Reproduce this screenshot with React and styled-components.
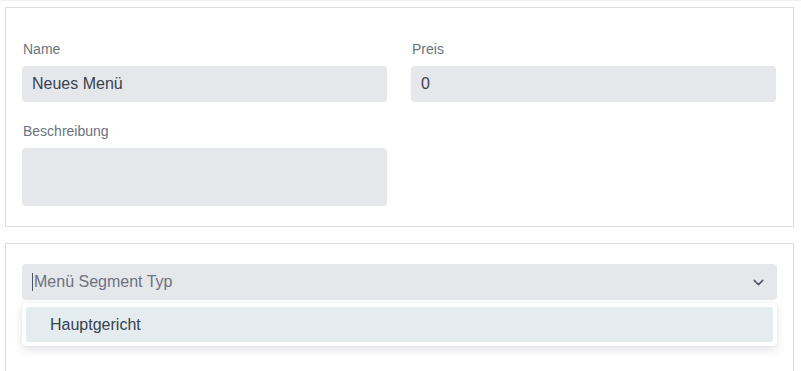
import React from 'react';
import styled, { createGlobalStyle } from 'styled-components';

const GlobalStyle = createGlobalStyle`
  html, body {
    margin: 0;
    padding: 0;
    background: #ffffff;
    font-family: 'Liberation Sans', Arial, sans-serif;
    overflow: hidden;
  }
  * {
    box-sizing: border-box;
  }
`;

const Page = styled.div`
  width: 801px;
  height: 371px;
  overflow: hidden;
  border-top: 1px solid #f1f1f3;
  padding: 6px 7px 0 5px;
  display: flex;
  flex-direction: column;
  gap: 16px;
`;

const Card = styled.section`
  border: 1px solid #dcdcdf;
  background: #ffffff;
  padding: ${props => props.padding};
  min-height: ${props => props.minHeight || 'auto'};
`;

const FieldGrid = styled.div`
  display: grid;
  grid-template-columns: 365px 365px;
  column-gap: 24px;
  row-gap: 20px;
`;

const Field = styled.div`
  display: flex;
  flex-direction: column;
  gap: 8px;
`;

const Label = styled.label`
  font-size: 14px;
  line-height: 18px;
  color: #6b7280;
  padding-left: 1px;
`;

const Input = styled.div`
  height: ${props => (props.tall ? '58px' : '36px')};
  background: #e5e7eb;
  border-radius: 4px;
  padding: 0 10px;
  display: flex;
  align-items: center;
  font-size: 16px;
  color: #374151;
`;

const SelectWrap = styled.div`
  position: relative;
`;

const SelectBox = styled.div`
  height: 36px;
  width: 755px;
  background: #e5e7eb;
  border-radius: 4px;
  padding: 0 10px;
  display: flex;
  align-items: center;
  justify-content: space-between;
  font-size: 16px;
  color: #6b7280;
`;

const Placeholder = styled.span`
  display: flex;
  align-items: center;
`;

const Caret = styled.span`
  width: 1px;
  height: 18px;
  background: #4b5563;
  margin-right: 1px;
`;

const Chevron = styled.svg`
  width: 17px;
  height: 17px;
  margin-right: 0;
  color: #4b5563;
`;

const Menu = styled.ul`
  position: absolute;
  top: 39px;
  left: 0;
  width: 755px;
  margin: 0;
  padding: 4px;
  list-style: none;
  background: #ffffff;
  border-radius: 4px;
  box-shadow: 0 4px 10px rgba(30, 41, 59, 0.12), 0 0 2px rgba(30, 41, 59, 0.08);
`;

const Option = styled.li`
  height: 35px;
  border-radius: 3px;
  padding: 0 24px;
  display: flex;
  align-items: center;
  font-size: 16px;
  color: #374151;
  background: ${props => (props.active ? '#e5ecef' : 'transparent')};
`;

const App = () => (
  <>
    <GlobalStyle />
    <Page>
      <Card padding="32px 16px 20px 16px">
        <FieldGrid>
          <Field>
            <Label>Name</Label>
            <Input>Neues Menü</Input>
          </Field>
          <Field>
            <Label>Preis</Label>
            <Input>0</Input>
          </Field>
          <Field>
            <Label>Beschreibung</Label>
            <Input tall />
          </Field>
        </FieldGrid>
      </Card>
      <Card padding="20px 16px" minHeight="200px">
        <SelectWrap>
          <SelectBox>
            <Placeholder>
              <Caret />
              Menü Segment Typ
            </Placeholder>
            <Chevron viewBox="0 0 24 24" fill="none" stroke="currentColor" strokeWidth="2" strokeLinecap="round" strokeLinejoin="round">
              <path d="M6 9l6 6 6-6" />
            </Chevron>
          </SelectBox>
          <Menu>
            <Option active>Hauptgericht</Option>
          </Menu>
        </SelectWrap>
      </Card>
    </Page>
  </>
);

export default App;
